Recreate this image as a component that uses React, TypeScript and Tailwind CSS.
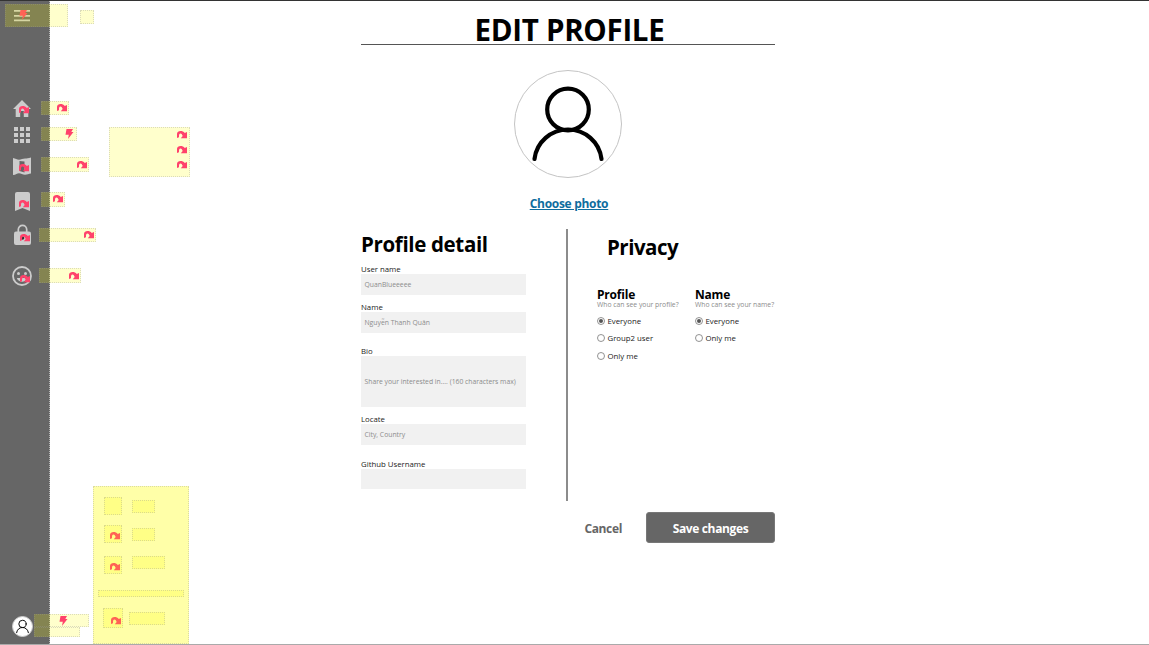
import type { ReactNode } from "react";

type Box = { box: string; tone?: string };

const LIGHT = "bg-[#ffff00]/20";

const hotspots: Box[] = [
  { box: "left-[5px] top-[4px] w-[63px] h-[23px]" },
  { box: "left-[80px] top-[10px] w-[14px] h-[14px]" },
  { box: "left-[41px] top-[101px] w-[28px] h-[14px]" },
  { box: "left-[41px] top-[127px] w-[36px] h-[14px]" },
  { box: "left-[41px] top-[157px] w-[48px] h-[15px]" },
  { box: "left-[109px] top-[127px] w-[81px] h-[50px]" },
  { box: "left-[41px] top-[192px] w-[24px] h-[15px]" },
  { box: "left-[39px] top-[228px] w-[57px] h-[14px]" },
  { box: "left-[39px] top-[268px] w-[42px] h-[15px]" },
  { box: "left-[34px] top-[614px] w-[55px] h-[13px]" },
  { box: "left-[34px] top-[627px] w-[46px] h-[10px]" },
  { box: "left-[93px] top-[486px] w-[96px] h-[158px]", tone: "bg-[#ffffa8]" },
  { box: "left-[104px] top-[497px] w-[18px] h-[18px]", tone: "bg-[#ffff86]" },
  { box: "left-[132px] top-[500px] w-[23px] h-[13px]", tone: "bg-[#ffff86]" },
  { box: "left-[104px] top-[525px] w-[18px] h-[18px]", tone: "bg-[#ffff86]" },
  { box: "left-[132px] top-[528px] w-[23px] h-[13px]", tone: "bg-[#ffff86]" },
  { box: "left-[104px] top-[556px] w-[18px] h-[18px]", tone: "bg-[#ffff86]" },
  { box: "left-[132px] top-[556px] w-[33px] h-[13px]", tone: "bg-[#ffff86]" },
  { box: "left-[98px] top-[590px] w-[86px] h-[7px]", tone: "bg-[#ffff86]" },
  { box: "left-[103px] top-[608px] w-[20px] h-[20px]", tone: "bg-[#ffff86]" },
  { box: "left-[129px] top-[612px] w-[36px] h-[13px]", tone: "bg-[#ffff86]" },
];

const arrows = [
  "left-[19px] top-[106px]",
  "left-[57px] top-[104px]",
  "left-[19px] top-[164px]",
  "left-[77px] top-[161px]",
  "left-[19px] top-[200px]",
  "left-[53px] top-[195px]",
  "left-[20px] top-[234px]",
  "left-[84px] top-[231px]",
  "left-[20px] top-[275px]",
  "left-[69px] top-[272px]",
  "left-[177px] top-[131px]",
  "left-[177px] top-[146px]",
  "left-[177px] top-[161px]",
];

const menuArrows = [
  "left-[110px] top-[532px]",
  "left-[110px] top-[563px]",
  "left-[111px] top-[617px]",
];

function Arrow({ at, color }: { at: string; color: string }) {
  return (
    <svg className={`absolute h-[8px] w-[10px] ${at} ${color}`} viewBox="0 0 10 8" fill="currentColor">
      <path d="M0 7V2.800C.3 1 1.500 0 3.500 0 5.300 0 6.600.6 7.800 2L10 1V7.200H3.800L5.700 5.100C5.100 3.300 4.300 2.500 3.400 2.500 2.400 2.500 1.900 3.400 2 6.200Z" />
    </svg>
  );
}

function Bolt({ at, color }: { at: string; color: string }) {
  return (
    <svg className={`absolute h-[10px] w-[9px] ${at} ${color}`} viewBox="0 0 9 10" fill="currentColor">
      <path d="M1.500 0H8L6.300 3H8.500L3 10 3.800 5.700H.5Z" />
    </svg>
  );
}

function Person({ className, stroke }: { className: string; stroke: number }) {
  return (
    <svg className={className} viewBox="0 0 108 108" fill="none" stroke="black" strokeWidth={stroke} strokeLinecap="round">
      <circle cx="54" cy="39.500" r="20.800" />
      <path d="M20.500 89C22.500 72 37 59.500 54 59.500S85.500 72 87.500 89" />
    </svg>
  );
}

function Sidebar() {
  return (
    <aside className="flex w-[50px] shrink-0 flex-col items-center border-r border-dotted border-[#b5b5b5] bg-[#666] pr-[5px] text-[#ccc]">
      <svg className="mt-[9px] h-[12px] w-[16px]" viewBox="0 0 16 12" fill="currentColor">
        <path d="M0 0H16V1.700H0ZM0 5H16V6.700H0ZM0 9.500H16V11.200H0Z" />
      </svg>
      <svg className="mt-[78px] h-[17px] w-[18px]" viewBox="2 3 20 17" preserveAspectRatio="none" fill="currentColor">
        <path d="M10 20v-6h4v6h5v-8h3L12 3 2 12h3v8z" />
      </svg>
      <svg className="mt-[10px] h-[16px] w-[16px]" viewBox="0 0 16 16" fill="currentColor">
        <path d="M0 0h4v4H0zM6 0h4v4H6zM12 0h4v4h-4zM0 6h4v4H0zM6 6h4v4H6zM12 6h4v4h-4zM0 12h4v4H0zM6 12h4v4H6zM12 12h4v4h-4z" />
      </svg>
      <svg className="mt-[14px] h-[18px] w-[18px]" viewBox="0 0 18 18" fill="currentColor" fillRule="evenodd">
        <path d="M0 1C2.500 1.300 4 2.700 6 2.700S10 1.500 12 1.500 15 1.300 18 .5V16.500C15.500 16.500 14.500 17.800 12 17.800S8 16.300 6 16.300 3 18 0 18ZM6.500 4V14L11.500 15.500V4.500Z" />
      </svg>
      <svg className="mt-[17px] h-[19px] w-[15px]" viewBox="0 0 15 19" fill="currentColor">
        <path d="M0 2Q0 0 2 0H13Q15 0 15 2V19L7.500 16 0 19Z" />
      </svg>
      <svg className="mt-[13px] h-[21px] w-[17px]" viewBox="0 0 17 21" fill="currentColor">
        <path d="M4.300 8V5.500a4.200 4.200 0 0 1 8.400 0V8" fill="none" stroke="currentColor" strokeWidth="1.700" />
        <path d="M2 7.500H15Q17 7.500 17 9.500V19Q17 21 15 21H2Q0 21 0 19V9.500Q0 7.500 2 7.500Z" />
        <circle cx="8.500" cy="14" r="1.800" fill="#333" />
      </svg>
      <svg className="mt-[21px] h-[20px] w-[20px]" viewBox="0 0 20 20" fill="currentColor">
        <circle cx="10" cy="10" r="9" fill="none" stroke="currentColor" strokeWidth="1.800" />
        <circle cx="6.500" cy="7.500" r="1.500" />
        <circle cx="13.500" cy="7.500" r="1.500" />
        <path d="M4.800 12H15.200C13.500 17 6.500 17 4.800 12Z" />
      </svg>
      <div className="mt-auto mb-[7px] flex size-[21px] items-center justify-center rounded-full border border-[#ccc] bg-white">
        <Person className="size-[19px]" stroke={5.500} />
      </div>
    </aside>
  );
}

function Field({ label, gap, height, children }: { label: string; gap: string; height: string; children?: ReactNode }) {
  return (
    <label className={`block ${gap}`}>
      <span className="block h-[10px] text-[7.800px] leading-[10px] whitespace-nowrap text-[#222]">{label}</span>
      <span className={`flex items-center bg-[#f1f1f1] pt-[2px] pl-[3.500px] text-[6.800px] whitespace-nowrap text-[#8c8c8c] ${height}`}>
        {children}
      </span>
    </label>
  );
}

function Radio({ label, checked = false }: { label: string; checked?: boolean }) {
  return (
    <div className="flex h-[17.500px] items-center gap-[2.500px] text-[7.800px] whitespace-nowrap text-[#222]">
      <svg className="size-[8px]" viewBox="0 0 8 8">
        <circle cx="4" cy="4" r="3.500" fill="white" stroke="#777" strokeWidth=".8" />
        {checked && <circle cx="4" cy="4" r="2" fill="#555" />}
      </svg>
      <span className="pt-[2px]">{label}</span>
    </div>
  );
}

function PrivacyGroup({ title, hint, className, children }: { title: string; hint: string; className: string; children: ReactNode }) {
  return (
    <div className={className}>
      <h3 className="h-[12px] text-[12px] leading-[12px] font-bold tracking-[-0.200px]">{title}</h3>
      <p className="mb-[3px] h-[8px] text-[6.800px] leading-[8px] whitespace-nowrap text-[#8c8c8c]">{hint}</p>
      {children}
    </div>
  );
}

export default function App() {
  return (
    <div className="relative flex h-[645px] w-[1149px] overflow-hidden border-t border-b border-t-[#333] border-b-[#aaa] bg-white font-['Open_Sans','Noto_Sans',sans-serif] text-black">
      <Sidebar />
      <main className="ml-[311px] w-[414px]">
        <h1 className="h-[44px] border-b border-[#555] pt-[9px] pl-[3px] text-center text-[29.500px] leading-[40px] font-bold tracking-[-0.300px] whitespace-nowrap">
          EDIT PROFILE
        </h1>
        <div className="mt-[25px] flex flex-col items-center">
          <div className="size-[108px] rounded-full border border-[#c4c4c4]">
            <Person className="-m-px size-[108px]" stroke={4.200} />
          </div>
          <a className="mt-[18px] pl-[2px] text-[12px] leading-[16px] font-bold tracking-[-0.300px] whitespace-nowrap text-[#0f6d9e]">
            <span className="underline">Choose photo</span>
          </a>
        </div>
        <div className="mt-[17px] flex h-[272px]">
          <section className="w-[205px] pr-[40px]">
            <h2 className="h-[35px] text-[20.500px] leading-[30px] font-bold tracking-[-0.350px] whitespace-nowrap">Profile detail</h2>
            <Field label="User name" gap="mt-0" height="h-[21px]">QuanBlueeeee</Field>
            <Field label="Name" gap="mt-[7px]" height="h-[21px]">Nguyễn Thanh Quân</Field>
            <Field label="Bio" gap="mt-[13px]" height="h-[51px]">Share your interested in.... (160 characters max)</Field>
            <Field label="Locate" gap="mt-[7px]" height="h-[21px]">City, Country</Field>
            <Field label="Github Username" gap="mt-[14px]" height="h-[20px]" />
          </section>
          <section className="flex-1 border-l-2 border-[#8c8c8c] pl-[29px]">
            <h2 className="mt-[3px] ml-[10px] h-[57px] text-[20.500px] leading-[30px] font-bold tracking-[-0.500px] whitespace-nowrap">Privacy</h2>
            <div className="flex">
              <PrivacyGroup className="w-[98px]" title="Profile" hint="Who can see your profile?">
                <Radio label="Everyone" checked />
                <Radio label="Group2 user" />
                <Radio label="Only me" />
              </PrivacyGroup>
              <PrivacyGroup className="" title="Name" hint="Who can see your name?">
                <Radio label="Everyone" checked />
                <Radio label="Only me" />
              </PrivacyGroup>
            </div>
          </section>
        </div>
        <div className="mt-[11px] flex items-center justify-end gap-[24px] text-[12px] font-bold tracking-[-0.350px] whitespace-nowrap">
          <button className="pt-[2px] text-[#666]">Cancel</button>
          <button className="h-[31px] w-[129px] rounded-[3px] border border-[#777] bg-[#666] pt-[2px] text-white">Save changes</button>
        </div>
      </main>
      <div className="pointer-events-none absolute -top-px left-0">
        {hotspots.map((h) => (
          <div key={h.box} className={`absolute border border-dotted border-[#999]/35 ${h.box} ${h.tone ?? LIGHT}`} />
        ))}
        {arrows.map((at) => (
          <Arrow key={at} at={at} color="text-[#ff426b]" />
        ))}
        {menuArrows.map((at) => (
          <Arrow key={at} at={at} color="text-[#ff6355]" />
        ))}
        <Bolt at="left-[19px] top-[10px]" color="text-[#ff6355]" />
        <Bolt at="left-[65px] top-[129px]" color="text-[#ff426b]" />
        <Bolt at="left-[59px] top-[616px]" color="text-[#ff426b]" />
      </div>
    </div>
  );
}
